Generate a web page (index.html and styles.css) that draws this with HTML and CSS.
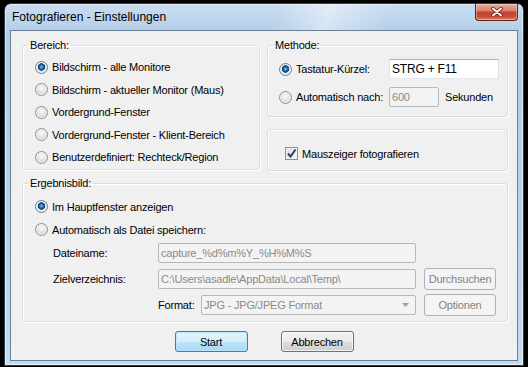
FILE: index.html
```html
<!DOCTYPE html>
<html lang="de">
<head>
    <meta charset="UTF-8">
    <title>Fotografieren - Einstellungen</title>
    <link rel="stylesheet" href="styles.css">
</head>
<body>
    <div class="window">
        <div class="titlebar">
            <span class="title">Fotografieren - Einstellungen</span>
            <button class="close" title="Schließen">
                <svg width="12" height="10" viewBox="0 0 12 10">
                    <path d="M2 1.5 L10 8.5 M10 1.5 L2 8.5" stroke="#5a1810" stroke-width="3.6" stroke-linecap="round"/>
                    <path d="M2 1.5 L10 8.5 M10 1.5 L2 8.5" stroke="#fff" stroke-width="2" stroke-linecap="round"/>
                </svg>
            </button>
        </div>

        <div class="client">
            <div class="top-row">
                <fieldset class="group group-area">
                    <legend>Bereich:</legend>
                    <div class="options">
                        <label class="option"><input type="radio" name="area" checked>Bildschirm - alle Monitore</label>
                        <label class="option"><input type="radio" name="area">Bildschirm - aktueller Monitor (Maus)</label>
                        <label class="option"><input type="radio" name="area">Vordergrund-Fenster</label>
                        <label class="option"><input type="radio" name="area">Vordergrund-Fenster - Klient-Bereich</label>
                        <label class="option"><input type="radio" name="area">Benutzerdefiniert: Rechteck/Region</label>
                    </div>
                </fieldset>

                <div class="right-col">
                    <fieldset class="group group-method">
                        <legend>Methode:</legend>
                        <div class="method-grid">
                            <label class="option"><input type="radio" name="method" checked>Tastatur-Kürzel:</label>
                            <input type="text" class="text hotkey" value="STRG + F11">
                            <label class="option"><input type="radio" name="method">Automatisch nach:</label>
                            <div class="delay">
                                <input type="text" class="text seconds" value="600" disabled>
                                <span>Sekunden</span>
                            </div>
                        </div>
                    </fieldset>

                    <div class="group group-cursor">
                        <label class="option"><input type="checkbox" checked>Mauszeiger fotografieren</label>
                    </div>
                </div>
            </div>

            <fieldset class="group group-result">
                <legend>Ergebnisbild:</legend>
                <div class="options">
                    <label class="option"><input type="radio" name="result" checked>Im Hauptfenster anzeigen</label>
                    <label class="option"><input type="radio" name="result">Automatisch als Datei speichern:</label>
                </div>
                <div class="file-grid">
                    <span class="field-label">Dateiname:</span>
                    <input type="text" class="text" value="capture_%d%m%Y_%H%M%S" disabled>
                    <span></span>

                    <span class="field-label">Zielverzeichnis:</span>
                    <input type="text" class="text" value="C:\Users\asadle\AppData\Local\Temp\" disabled>
                    <button class="btn" disabled>Durchsuchen</button>

                    <span></span>
                    <div class="format">
                        <span class="format-label">Format:</span>
                        <div class="select disabled">
                            <span>JPG - JPG/JPEG Format</span>
                            <svg width="7" height="4" viewBox="0 0 7 4"><path d="M0 0 H7 L3.5 4 Z" fill="#a0a0a0"/></svg>
                        </div>
                    </div>
                    <button class="btn" disabled>Optionen</button>
                </div>
            </fieldset>

            <div class="actions">
                <button class="btn default">Start</button>
                <button class="btn">Abbrechen</button>
            </div>
        </div>
    </div>
</body>
</html>
```

FILE: styles.css
```css
html, body {
    margin: 0;
    padding: 0;
    background-color: #000;
}
body {
    font-family: 'Liberation Sans', Arial, sans-serif;
    font-size: 11px;
    letter-spacing: -0.2px;
    color: #000;
}
.window {
    margin: 3px 0 0 4px;
    width: 520px;
    height: 363px;
    box-sizing: border-box;
    border: 1px solid #2c3b4b;
    border-radius: 7px 7px 0 0;
    padding: 0 5px 4px 5px;
    display: flex;
    flex-direction: column;
    background:
        linear-gradient(100deg, rgba(255,255,255,0) 52%, rgba(255,255,255,0.45) 62%, rgba(255,255,255,0) 74%) top / 100% 30px no-repeat,
        linear-gradient(180deg, #c9ddf1 0, #b4cde8 28px, #b9d2eb 60%, #c4dcf1 100%);
    box-shadow: inset 0 0 0 1px rgba(255,255,255,0.55);
}
.titlebar {
    height: 26px;
    display: flex;
    justify-content: space-between;
    align-items: flex-start;
}
.title {
    font-size: 12px;
    letter-spacing: 0;
    padding: 6px 0 0 2px;
    color: #000;
}
.close {
    width: 43px;
    height: 17px;
    padding: 0;
    margin: 0;
    border: 1px solid #6b2216;
    border-top: none;
    border-radius: 0 0 4px 4px;
    background: linear-gradient(180deg, #e9ad9d 0, #d98470 40%, #c2452f 52%, #c5503a 80%, #dc8468 100%);
    box-shadow: inset 0 0 0 1px rgba(255,255,255,0.35);
    display: flex;
    align-items: center;
    justify-content: center;
}
.client {
    flex: 1;
    border: 1px solid #6c8198;
    background-color: #f0f0f0;
    padding: 8px 9px 0 11px;
    display: flex;
    flex-direction: column;
}

/* group boxes */
.group {
    margin: 0;
    padding: 0;
    min-width: 0;
    border: 1px solid #d5dfe5;
    border-radius: 3px;
    box-shadow: inset 1px 1px 0 #fff, 1px 1px 0 #fff;
}
.group legend {
    margin-left: 5px;
    padding: 0 2px;
    line-height: 13px;
}
.top-row {
    display: flex;
    align-items: flex-start;
    gap: 7px;
}
.group-area {
    width: 238px;
    box-sizing: border-box;
}
.group-area .options {
    padding: 4px 0 0 12px;
}
.options .option {
    height: 22.5px;
}
.option {
    display: flex;
    align-items: center;
    gap: 4px;
    white-space: nowrap;
}
.right-col {
    flex: 1;
    display: flex;
    flex-direction: column;
}
.method-grid {
    display: grid;
    grid-template-columns: 110px auto;
    row-gap: 8px;
    align-items: center;
    padding: 7px 0 9px 11px;
}
.delay {
    display: flex;
    align-items: center;
    gap: 6px;
}
.group-cursor {
    margin-top: 12px;
    padding: 17px 0 10px 17px;
}
.group-cursor .option {
    height: 13px;
}
.group-result {
    margin-top: 6px;
}
.group-result .options {
    padding: 5px 0 0 12px;
}
.group-result .options .option {
    height: 23px;
}
.file-grid {
    display: grid;
    grid-template-columns: 97px 258px 72px;
    grid-auto-rows: 22px;
    column-gap: 8px;
    row-gap: 4px;
    align-items: center;
    padding: 1px 0 5px 30px;
}
.format {
    display: flex;
    align-items: center;
}
.format-label {
    width: 43px;
}

/* radio + checkbox */
input[type=radio],
input[type=checkbox] {
    appearance: none;
    -webkit-appearance: none;
    margin: 0;
    width: 13px;
    height: 13px;
    flex: none;
    box-sizing: border-box;
}
input[type=radio] {
    border-radius: 50%;
    border: 1px solid #8e8f8f;
    background: radial-gradient(circle at 50% 40%, #fafafa 0, #e9e9e9 3px, #d3d3d3 6px);
    box-shadow: inset 0 0 0 1px #f4f4f4;
}
input[type=radio]:checked {
    border-color: #6e7b88;
    background: radial-gradient(circle at 50% 45%, #8ed2f5 0, #2b7dc2 1.5px, #114776 3px, #1b4f7c 3.5px, #cfe3f1 4px, #e6e6e6 5.5px);
}
input[type=checkbox] {
    border: 1px solid #8f8f8f;
    background: linear-gradient(135deg, #dcdcdc 0, #f7f7f7 100%);
    box-shadow: inset 0 0 0 1px #f2f2f2;
}
input[type=checkbox]:checked {
    background:
        url("data:image/svg+xml,%3Csvg xmlns='http://www.w3.org/2000/svg' width='11' height='11'%3E%3Cpath d='M2 5.5 L4.5 8.5 L9.5 1.5' fill='none' stroke='%23343f6e' stroke-width='2'/%3E%3C/svg%3E") center / 11px 11px no-repeat,
        linear-gradient(135deg, #dcdcdc 0, #f7f7f7 100%);
}

/* text inputs */
.text {
    font: inherit;
    letter-spacing: inherit;
    height: 20px;
    box-sizing: border-box;
    margin: 0;
    padding: 0 2px;
    border: 1px solid #abadb3;
    border-color: #abadb3 #dbdfe6 #e3e9ef #e2e3ea;
    background-color: #fff;
    color: #000;
    outline: none;
}
.hotkey {
    width: 110px;
    font-size: 12px;
}
.seconds {
    width: 50px;
}
.text:disabled,
.select.disabled {
    border: 1px solid #b8b8b8;
    border-radius: 2px;
    background-color: #f3f3f3;
    color: #8a8a8a;
}
.file-grid .text {
    width: 258px;
}
.select {
    width: 215px;
    height: 20px;
    box-sizing: border-box;
    display: flex;
    align-items: center;
    justify-content: space-between;
    padding: 0 6px 0 2px;
}

/* buttons */
.btn {
    font: inherit;
    letter-spacing: inherit;
    height: 21px;
    margin: 0;
    padding: 0;
    color: #000;
    border: 1px solid #707070;
    border-radius: 3px;
    background: linear-gradient(180deg, #f2f2f2 0, #ebebeb 50%, #dddddd 50%, #cfcfcf 100%);
    box-shadow: inset 0 0 0 1px rgba(255,255,255,0.7);
}
.btn:disabled {
    height: 22px;
    width: 72px;
    border-color: #adb2b5;
    background: #f4f4f4;
    box-shadow: none;
    color: #838383;
}
.btn.default {
    border-color: #3c7fb1;
    background: linear-gradient(180deg, #e6f5fc 0, #d4eefb 50%, #bde5fb 50%, #a7d9f5 100%);
    box-shadow: inset 0 0 0 1px #bfe6f8;
}
.actions {
    display: flex;
    justify-content: center;
    gap: 33px;
    margin-top: 9px;
    padding-right: 2px;
}
.actions .btn {
    width: 73px;
}
```
